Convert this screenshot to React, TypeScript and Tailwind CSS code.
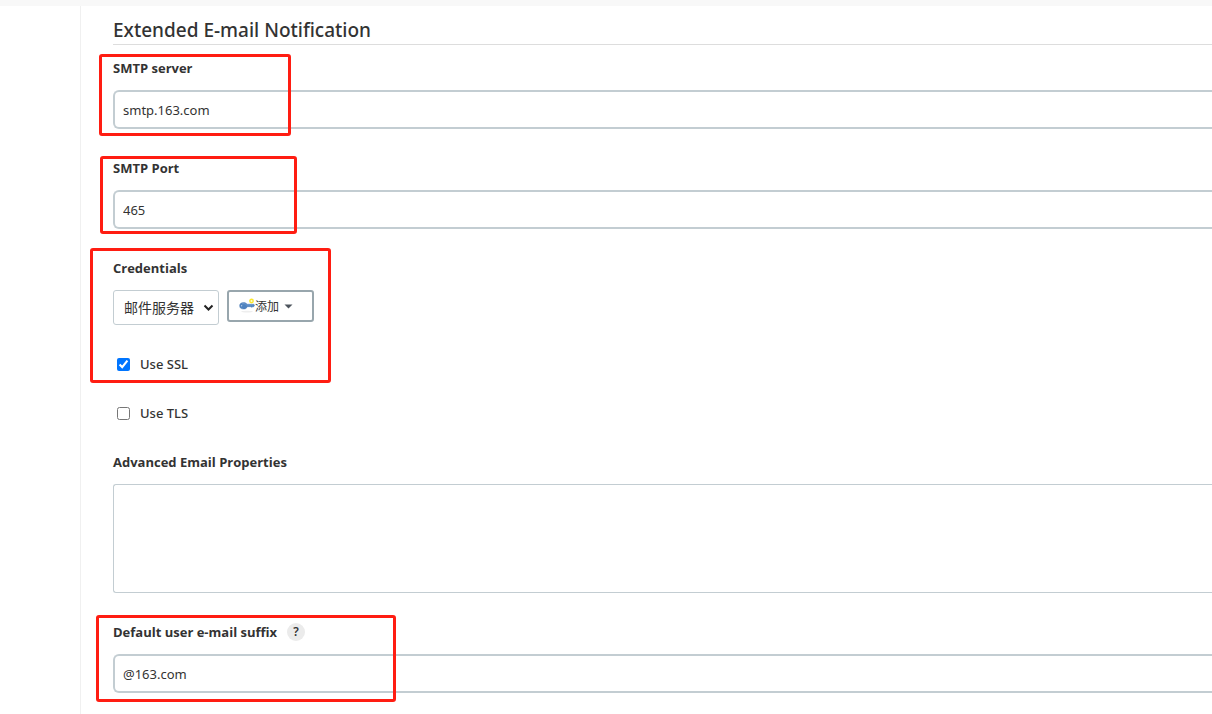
import { useState } from "react";
import type { ReactNode } from "react";

function Highlight({ className }: { className: string }) {
  return (
    <div
      aria-hidden="true"
      className={`pointer-events-none absolute rounded-[3px] border-3 border-[#ff1d12] ${className}`}
    />
  );
}

function Field({
  id,
  label,
  help,
  highlight,
  children,
}: {
  id: string;
  label: string;
  help?: ReactNode;
  highlight?: string;
  children: ReactNode;
}) {
  return (
    <div className="relative flex flex-col gap-3">
      <div className="flex h-5 items-center gap-2.5">
        <label htmlFor={id} className="font-['Open_Sans','Noto_Sans',sans-serif] font-bold">
          {label}
        </label>
        {help}
      </div>
      {children}
      {highlight && <Highlight className={highlight} />}
    </div>
  );
}

function TextField({ id, value }: { id: string; value: string }) {
  return (
    <input
      id={id}
      type="text"
      defaultValue={value}
      className="h-[39px] w-full rounded-l-md border-2 border-r-0 border-[#c3cdd2] bg-white px-2 text-[13px] outline-none"
    />
  );
}

function Check({ label, initial }: { label: string; initial: boolean }) {
  const [checked, setChecked] = useState(initial);
  return (
    <label className="flex h-5 items-center gap-[10px] self-start pl-1 font-medium">
      <input
        type="checkbox"
        checked={checked}
        onChange={(e) => setChecked(e.target.checked)}
        className="size-[13px] accent-[#0075ff]"
      />
      {label}
    </label>
  );
}

function KeyIcon() {
  return (
    <svg width="16" height="16" viewBox="0 0 16 16" aria-hidden="true">
      <ellipse cx="8" cy="13.6" rx="6" ry="0.8" fill="#eeeeee" />
      <path
        d="M0.600 7.800C0.600 5.600 2.300 4.500 4.500 4.500c1.700 0 2.900.6 3.600 1.700h6.700l.8 1-.8 1.500h-1.200l-.6.8-1-.8H8.300C7.700 10.200 6.600 11.100 4.700 11.100 2.300 11.100 0.600 10 0.600 7.800Z"
        fill="#4f83bf"
        stroke="#4777b0"
        strokeWidth="0.4"
      />
      <path d="M2.800 5.900c1.700-.7 3.600-.4 4.800 1.100h6.800" fill="none" stroke="#77a1d2" strokeWidth="0.7" />
      <circle cx="2.600" cy="7.700" r="0.7" fill="#b4cae4" />
      <circle cx="12.500" cy="3" r="1.700" fill="#fffbd0" stroke="#fbe72c" strokeWidth="1.400" />
    </svg>
  );
}

export default function App() {
  return (
    <div className="flex min-h-screen flex-col bg-white font-['Noto_Sans','Noto_Sans_CJK_SC',sans-serif] text-[13px] leading-5 text-[#333333]">
      <header className="h-1.5 bg-[#f8f8f8]" />
      <div className="flex flex-1">
        <aside className="w-[81px] shrink-0 border-r border-[#f0f0f0]" />
        <main className="min-w-0 flex-1 pl-8">
          <h1 className="mb-[13px] border-b border-[#dddddd] pt-2.5 text-[19px] leading-7 font-medium">
            Extended E-mail Notification
          </h1>
          <form className="flex flex-col gap-[29px]" onSubmit={(e) => e.preventDefault()}>
            <Field id="server" label="SMTP server" highlight="-left-3.5 -top-1 h-[82px] w-48">
              <TextField id="server" value="smtp.163.com" />
            </Field>
            <Field id="port" label="SMTP Port" highlight="-left-[13px] -top-0.5 h-[78px] w-[197px]">
              <TextField id="port" value="465" />
            </Field>
            <Field
              id="credentials"
              label="Credentials"
              highlight="-left-[23px] -top-2.5 h-[135px] w-[241px]"
            >
              <div className="flex items-start gap-2">
                <div className="grid items-center">
                  <select
                    id="credentials"
                    className="col-start-1 row-start-1 h-[35px] w-[106px] appearance-none rounded-[3px] border border-[#c3cdd2] bg-white pl-2.5 text-sm"
                  >
                    <option>邮件服务器</option>
                  </select>
                  <svg
                    className="pointer-events-none col-start-1 row-start-1 mr-1 justify-self-end"
                    width="12"
                    height="8"
                    viewBox="0 0 12 8"
                    fill="none"
                    aria-hidden="true"
                  >
                    <path d="M1.500 1.500 5.500 5.500 9.500 1.500" stroke="#222222" strokeWidth="2" />
                  </svg>
                </div>
                <button
                  type="button"
                  className="flex h-8 w-[87px] items-center rounded-[3px] border-2 border-[#98a6ad] bg-white pl-2.5 text-xs"
                >
                  <KeyIcon />
                  <span className="pt-0.5">添加</span>
                  <svg className="ml-[5px]" width="9" height="5" viewBox="0 0 9 5" aria-hidden="true">
                    <path d="M0.500 0.500h8L4.500 4.500Z" fill="#4d545d" />
                  </svg>
                </button>
              </div>
            </Field>
            <Check label="Use SSL" initial={true} />
            <Check label="Use TLS" initial={false} />
            <Field id="properties" label="Advanced Email Properties">
              <textarea
                id="properties"
                className="h-[109px] w-full resize-none rounded-l-[3px] border border-r-0 border-[#c3cdd2] bg-white p-2 text-[13px] outline-none"
              />
            </Field>
            <Field
              id="suffix"
              label="Default user e-mail suffix"
              highlight="-left-[17px] -top-[7px] h-[87px] w-[300px]"
              help={
                <button
                  type="button"
                  className="flex size-[18px] items-center justify-center rounded-full bg-[#ebebeb] text-xs font-semibold"
                >
                  ?
                </button>
              }
            >
              <TextField id="suffix" value="@163.com" />
            </Field>
          </form>
        </main>
      </div>
    </div>
  );
}
